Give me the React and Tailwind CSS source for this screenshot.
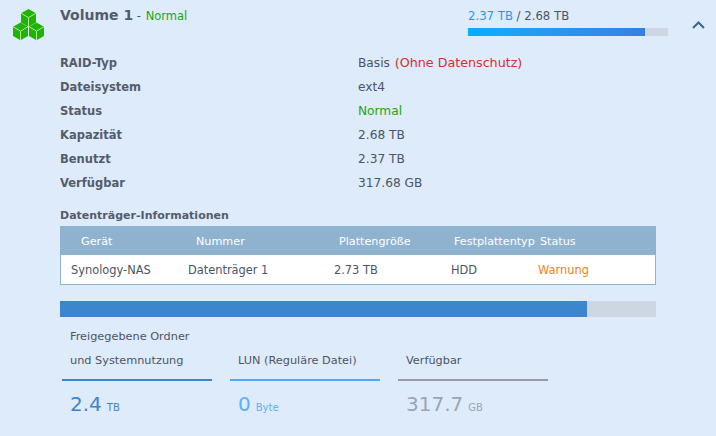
import React from 'react';

const font = { fontFamily: '"DejaVu Sans", sans-serif' };

const details = [
  { label: 'RAID-Typ', value: <>Basis <span className="ml-[1px] text-[12.7px] text-[#d32f2f]">(Ohne Datenschutz)</span></> },
  { label: 'Dateisystem', value: 'ext4' },
  { label: 'Status', value: <span className="text-[#1ca60f]">Normal</span> },
  { label: 'Kapazität', value: '2.68 TB' },
  { label: 'Benutzt', value: '2.37 TB' },
  { label: 'Verfügbar', value: '317.68 GB' },
];

const usage = [
  { title: ['Freigegebene Ordner', 'und Systemnutzung'], value: '2.4', unit: 'TB', line: 'border-[#3d85cd]', text: 'text-[#3d85cd]' },
  { title: ['LUN (Reguläre Datei)'], value: '0', unit: 'Byte', line: 'border-[#4eaaf2]', text: 'text-[#5cb0f5]' },
  { title: ['Verfügbar'], value: '317.7', unit: 'GB', line: 'border-[#949ca8]', text: 'text-[#9aa5b3]' },
];

const Cube = ({ x, y }) => (
  <g>
    <path d={`M${x} ${y}l7.5 4.2v9.3l-7.5 4.2l-7.5-4.2v-9.3z`} fill="#1eb400" />
    <path d={`M${x - 7.5} ${y + 4.2}l7.5 4.4l7.5-4.4M${x} ${y + 8.6}v9.1`} fill="none" stroke="#b4e6a8" strokeWidth="1" />
  </g>
);

const VolumeIcon = () => (
  <svg width="32" height="32" viewBox="12 9 32 32" className="shrink-0">
    <Cube x={28.5} y={9} />
    <Cube x={20.5} y={22.5} />
    <Cube x={36.5} y={22.5} />
  </svg>
);

export default function App() {
  return (
    <div style={font} className="w-[716px] h-[436px] overflow-hidden bg-[#deebfb] text-[#4c5566] text-[11.5px] flex">
      <div className="w-[60px] shrink-0 pt-[9px] pl-[12px]">
        <VolumeIcon />
      </div>

      <div className="w-[656px] flex flex-col">
        {/* Header */}
        <div className="h-[52px] flex">
          <div className="w-[408px] pt-[5px] leading-[20px] whitespace-nowrap">
            <span className="text-[14px] font-bold text-[#545c6c]">Volume 1</span>
            <span className="text-[11.5px]"> - </span>
            <span className="ml-[1px] text-[11.5px] text-[#1ca60f]">Normal</span>
          </div>
          <div className="w-[200px] pt-[9px]">
            <div className="text-[11.7px] leading-[15px] whitespace-nowrap">
              <span className="text-[#1e9bf0]">2.37 TB</span> / 2.68 TB
            </div>
            <div className="mt-[4px] h-[8px] bg-[#cdd6e1]">
              <div className="h-full w-[177px] bg-gradient-to-r from-[#00aeff] to-[#3580e0]"></div>
            </div>
          </div>
          <div className="pl-[24px] pt-[21px]">
            <svg width="13" height="8" viewBox="0 0 13 8" fill="none" stroke="#3c6494" strokeWidth="2">
              <path d="M1 7l5.5-5.5l5.5 5.5" />
            </svg>
          </div>
        </div>

        {/* Volume details */}
        <div className="flex flex-col">
          {details.map((row) => (
            <div key={row.label} className="h-[24px] flex items-center whitespace-nowrap">
              <div className="w-[298px] font-bold text-[#545c6c]">{row.label}</div>
              <div className="pb-[2px] text-[12.2px]">{row.value}</div>
            </div>
          ))}
        </div>

        {/* Disk table */}
        <div className="mt-[12px] leading-[16px] font-bold text-[11px] text-[#545c6c]">Datenträger-Informationen</div>
        <div className="mt-[2px] w-[596px] border border-[#8fb2ce] border-t-0">
          <div className="h-[29px] -mx-px pt-[4px] bg-[#8fb2ce] text-white text-[11.2px] relative flex items-center whitespace-nowrap">
            <div className="pl-[21px] w-[136px]">Gerät</div>
            <div className="w-[143px]">Nummer</div>
            <div className="w-[115px]">Plattengröße</div>
            <div className="w-[86px]">Festplattentyp</div>
            <div>Status</div>
          </div>
          <div className="h-[29px] pt-[2px] bg-white text-[11.4px] flex items-center whitespace-nowrap">
            <div className="pl-[10px] w-[127px]">Synology-NAS</div>
            <div className="w-[146px]">Datenträger 1</div>
            <div className="w-[117px]">2.73 TB</div>
            <div className="w-[87px]">HDD</div>
            <div className="text-[#f0811e]">Warnung</div>
          </div>
        </div>

        {/* Allocation bar */}
        <div className="mt-[16px] w-[596px] h-[16px] bg-[#cdd6e1]">
          <div className="h-full w-[527px] bg-[#3d85cd]"></div>
        </div>

        {/* Usage breakdown */}
        <div className="mt-[7px] pl-[2px] flex gap-[18px]">
          {usage.map((item) => (
            <div key={item.value} className="w-[150px]">
              <div className={`h-[57px] pl-[8px] border-b-2 ${item.line} flex flex-col justify-end text-[11.3px] whitespace-nowrap`}>
                {item.title.map((line) => (
                  <div key={line} className="h-[24px] leading-[24px]">{line}</div>
                ))}
                <div className="h-[6px]"></div>
              </div>
              <div className={`pl-[8px] pt-[8px] leading-[30px] ${item.text} whitespace-nowrap`}>
                <span className="text-[20px]">{item.value}</span>
                <span className="text-[10px] ml-[5px]">{item.unit}</span>
              </div>
            </div>
          ))}
        </div>
      </div>
    </div>
  );
}
